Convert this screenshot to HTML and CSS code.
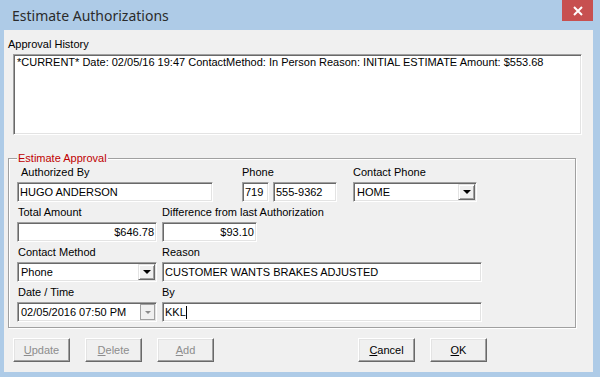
FILE: index.html
```html
<html>
  <head>
    <title>Estimate Authorizations</title>
    <link rel="stylesheet" href="styles.css">
  </head>
  <body>
    <div class="window">
      <div class="titlebar">
        <span class="title">Estimate Authorizations</span>
        <div class="close">
          <svg width="10" height="10" viewBox="0 0 10 10">
            <path d="M1 1L9 9M9 1L1 9" stroke="#ffffff" stroke-width="2"/>
          </svg>
        </div>
      </div>
      <div class="client">
        <div class="caption">Approval History</div>
        <div class="history sunken">
          <div class="history-row">*CURRENT* Date: 02/05/16 19:47 ContactMethod: In Person Reason: INITIAL ESTIMATE Amount: $553.68</div>
        </div>

        <div class="group">
          <span class="legend">Estimate Approval</span>

          <div class="row">
            <div class="field w-auth">
              <div class="lbl indent">Authorized By</div>
              <div class="edit sunken">HUGO ANDERSON</div>
            </div>
            <div class="field w-phone">
              <div class="lbl">Phone</div>
              <div class="phone-pair">
                <div class="edit sunken area">719</div>
                <div class="edit sunken number">555-9362</div>
              </div>
            </div>
            <div class="field w-contact">
              <div class="lbl">Contact Phone</div>
              <div class="combo sunken">
                <span class="combo-text">HOME</span>
                <span class="drop raised"><span class="arrow"></span></span>
              </div>
            </div>
          </div>

          <div class="row">
            <div class="field w-left">
              <div class="lbl">Total Amount</div>
              <div class="edit sunken right">$646.78</div>
            </div>
            <div class="field w-diff">
              <div class="lbl">Difference from last Authorization</div>
              <div class="edit sunken right">$93.10</div>
            </div>
          </div>

          <div class="row">
            <div class="field w-left">
              <div class="lbl">Contact Method</div>
              <div class="combo sunken">
                <span class="combo-text">Phone</span>
                <span class="drop raised"><span class="arrow"></span></span>
              </div>
            </div>
            <div class="field w-wide">
              <div class="lbl">Reason</div>
              <div class="edit sunken">CUSTOMER WANTS BRAKES ADJUSTED</div>
            </div>
          </div>

          <div class="row">
            <div class="field w-left">
              <div class="lbl">Date / Time</div>
              <div class="combo sunken">
                <span class="combo-text">02/05/2016 07:50 PM</span>
                <span class="drop flat"><span class="arrow grey"></span></span>
              </div>
            </div>
            <div class="field w-wide">
              <div class="lbl">By</div>
              <div class="edit sunken">KKL<span class="caret"></span></div>
            </div>
          </div>
        </div>

        <div class="buttons">
          <button class="btn disabled"><u>U</u>pdate</button>
          <button class="btn disabled"><u>D</u>elete</button>
          <button class="btn disabled"><u>A</u>dd</button>
          <button class="btn push-right"><u>C</u>ancel</button>
          <button class="btn"><u>O</u>K</button>
        </div>
      </div>
    </div>
  </body>
</html>
```

FILE: styles.css
```css
* {
  box-sizing: border-box;
}
body {
  margin: 0;
  font-family: "Liberation Sans", Arial, sans-serif;
  font-size: 11px;
  color: #000000;
}
.window {
  width: 600px;
  height: 377px;
  background-color: #aecbe7;
  display: flex;
  flex-direction: column;
  overflow: hidden;
}
.titlebar {
  height: 30px;
  display: flex;
  align-items: flex-start;
}
.title {
  font-family: "Noto Sans", "Open Sans", sans-serif;
  font-size: 14px;
  color: #2b2b2b;
  padding-left: 12px;
  margin-top: 6px;
}
.close {
  margin-left: auto;
  margin-right: 7px;
  width: 31px;
  height: 21px;
  background-color: #c75050;
  display: flex;
  align-items: center;
  justify-content: center;
}
.client {
  flex: 1;
  margin: 0 7px 5px 4px;
  background-color: #f0f0f0;
  padding-top: 8px;
}
.caption {
  margin-left: 4px;
  line-height: 13px;
  height: 13px;
}

/* 3d borders */
.sunken {
  border: 1px solid;
  border-color: #a0a0a0 #ffffff #ffffff #a0a0a0;
  box-shadow: inset 1px 1px 0 #696969, inset -1px -1px 0 #e3e3e3;
  background-color: #ffffff;
}
.raised {
  border: 1px solid;
  border-color: #e3e3e3 #696969 #696969 #e3e3e3;
  box-shadow: inset 1px 1px 0 #ffffff, inset -1px -1px 0 #a0a0a0;
  background-color: #f0f0f0;
}

.history {
  margin: 3px 0 0 9px;
  width: 569px;
  height: 81px;
  padding: 1px 0 0 3px;
}
.history-row {
  line-height: 13px;
  white-space: nowrap;
}

.group {
  position: relative;
  margin: 23px 0 0 4px;
  width: 568px;
  height: 170px;
  border: 1px solid #a0a0a0;
  box-shadow: inset 1px 1px 0 #ffffff, 1px 1px 0 #ffffff;
  padding: 7px 0 0 8px;
  display: flex;
  flex-direction: column;
  gap: 4px;
}
.legend {
  position: absolute;
  left: 8px;
  top: -7px;
  padding: 0 1px;
  line-height: 13px;
  background-color: #f0f0f0;
  color: #c00000;
}
.row {
  display: flex;
}
.field {
  display: flex;
  flex-direction: column;
}
.lbl {
  line-height: 13px;
  height: 13px;
  margin-bottom: 3px;
  white-space: nowrap;
}
.w-left .lbl {
  padding-left: 1px;
}
.lbl.indent {
  padding-left: 4px;
}
.w-auth {
  width: 196px;
}
.w-phone {
  width: 95px;
  margin-left: 29px;
}
.w-contact {
  width: 124px;
  margin-left: 16px;
}
.w-left {
  width: 140px;
}
.w-diff {
  width: 95px;
  margin-left: 5px;
}
.w-wide {
  width: 320px;
  margin-left: 5px;
}
.edit {
  height: 20px;
  display: flex;
  align-items: center;
  padding: 0 2px 0 2px;
  white-space: nowrap;
  overflow: hidden;
}
.edit.right {
  justify-content: flex-end;
}
.phone-pair {
  display: flex;
  gap: 4px;
}
.area {
  width: 27px;
}
.number {
  width: 64px;
}
.caret {
  display: inline-block;
  width: 1px;
  height: 13px;
  background-color: #000000;
}
.combo {
  height: 20px;
  display: flex;
  padding: 1px;
}
.combo-text {
  flex: 1;
  display: flex;
  align-items: center;
  padding-left: 2px;
  white-space: nowrap;
}
.drop {
  width: 17px;
  display: flex;
  align-items: center;
  justify-content: center;
}
.drop.flat {
  width: 15px;
  border: 1px solid #a0a0a0;
  background-color: #f0f0f0;
}
.arrow {
  width: 0;
  height: 0;
  border-left: 4px solid transparent;
  border-right: 4px solid transparent;
  border-top: 4px solid #000000;
}
.arrow.grey {
  border-left-width: 3px;
  border-right-width: 3px;
  border-top: 3px solid #8a8a8a;
}

.buttons {
  display: flex;
  gap: 15px;
  margin-top: 10px;
  padding-left: 9px;
}
.btn {
  width: 57px;
  height: 24px;
  padding: 0;
  font-family: "Liberation Sans", Arial, sans-serif;
  font-size: 11px;
  color: #000000;
  border: 1px solid;
  border-color: #ffffff #696969 #696969 #ffffff;
  box-shadow: inset -1px -1px 0 #a0a0a0, inset 1px 1px 0 #e3e3e3;
  background-color: #f0f0f0;
}
.btn.disabled {
  color: #8d8d8d;
}
.push-right {
  margin-left: 129px;
}
```
